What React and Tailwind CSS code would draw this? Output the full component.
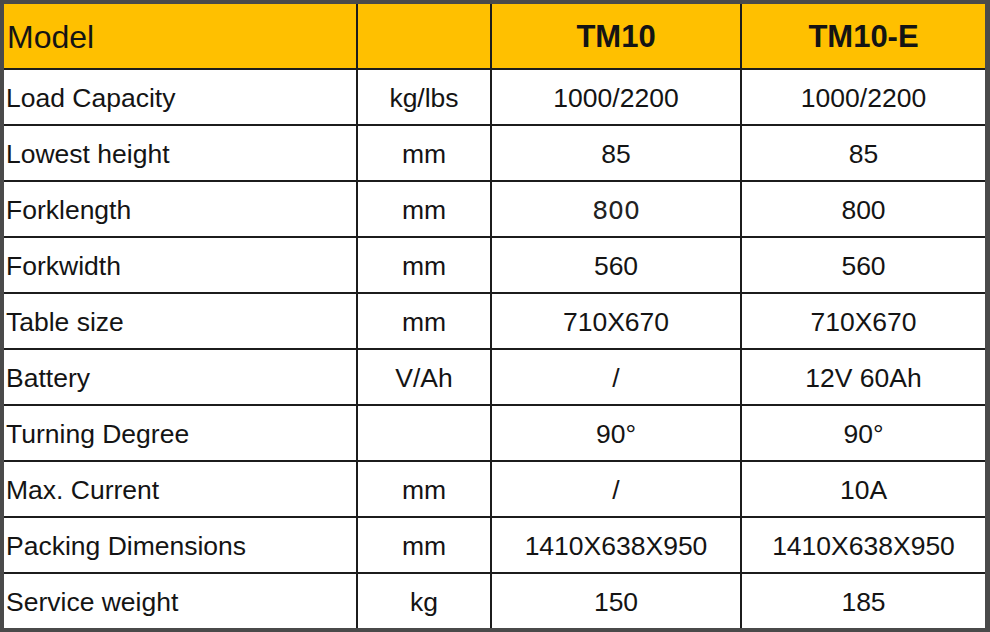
import React from "react";

const rows = [
  ["Load Capacity", "kg/lbs", "1000/2200", "1000/2200"],
  ["Lowest height", "mm", "85", "85"],
  ["Forklength", "mm", "800", "800"],
  ["Forkwidth", "mm", "560", "560"],
  ["Table size", "mm", "710X670", "710X670"],
  ["Battery", "V/Ah", "/", "12V 60Ah"],
  ["Turning Degree", "", "90°", "90°"],
  ["Max. Current", "mm", "/", "10A"],
  ["Packing Dimensions", "mm", "1410X638X950", "1410X638X950"],
  ["Service weight", "kg", "150", "185"],
];

export default function App() {
  return (
    <div className="w-[990px] h-[632px] bg-[#4a4a4a] pt-[4px] pl-[4px] pr-[5px] pb-[4px] overflow-hidden">
      <div
        className="grid grid-cols-[352px_132px_248px_243px] grid-rows-[64px_repeat(10,54px)] gap-[2px] bg-[#1c1c1c] text-[#141414]"
        style={{ fontFamily: '"Liberation Sans", Arial, sans-serif' }}
      >
        <div className="bg-[#ffc000] flex items-center pl-[3px] pt-[2px] text-[32px]">Model</div>
        <div className="bg-[#ffc000]"></div>
        <div className="bg-[#ffc000] flex items-center justify-center pt-[2px] text-[31px] font-bold">TM10</div>
        <div className="bg-[#ffc000] flex items-center justify-center pt-[2px] text-[31px] font-bold">TM10-E</div>
        {rows.map((r, i) => (
          <React.Fragment key={i}>
            <div className="bg-white flex items-center pl-[2px] pt-[3px] text-[26.5px]">{r[0]}</div>
            <div className="bg-white flex items-center justify-center pt-[3px] text-[26.5px]">{r[1]}</div>
            {r[2] === "800" ? (
              <div
                className="bg-white flex items-center justify-center pt-[3px] text-[25px] text-[#222]"
                style={{ fontFamily: '"DejaVu Sans", Verdana, sans-serif' }}
              >
                {r[2]}
              </div>
            ) : (
              <div className="bg-white flex items-center justify-center pt-[3px] text-[26.5px]">{r[2]}</div>
            )}
            <div className="bg-white flex items-center justify-center pt-[3px] text-[26.5px]">{r[3]}</div>
          </React.Fragment>
        ))}
      </div>
    </div>
  );
}
